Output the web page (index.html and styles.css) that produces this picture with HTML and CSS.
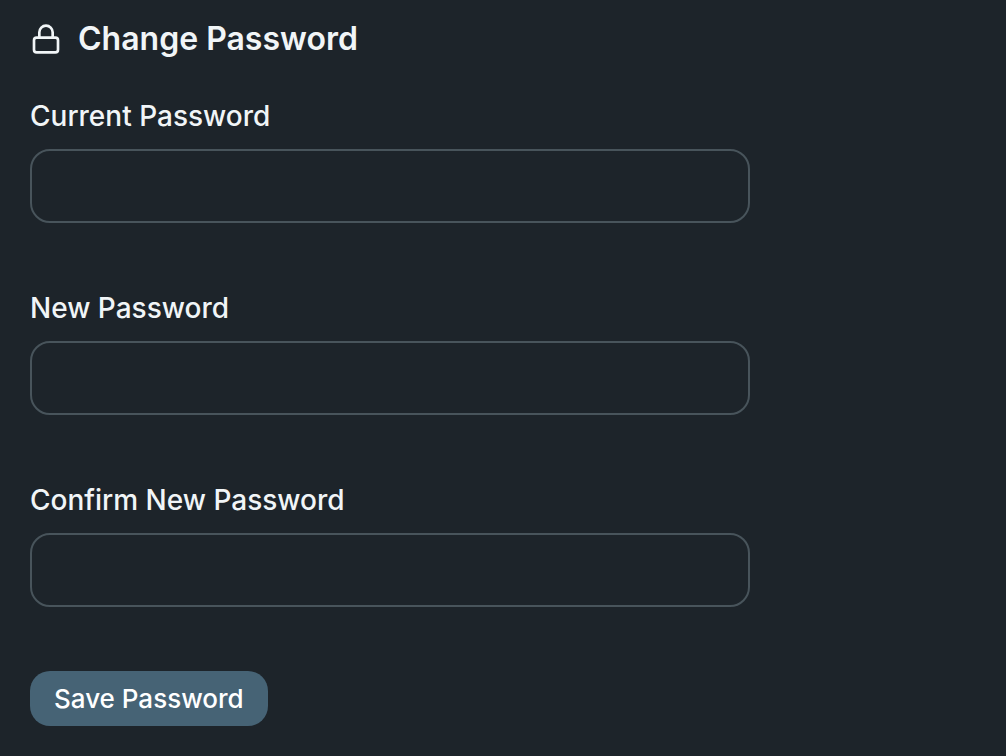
FILE: index.html
```html
<!DOCTYPE html>
<html lang="en">
<head>
    <meta charset="UTF-8">
    <meta name="viewport" content="width=device-width, initial-scale=1.0">
    <title>Change Password</title>
    <link rel="stylesheet" href="styles.css">
</head>
<body>
    <main class="settings">
        <h2 class="title">
            <svg class="lock-icon" viewBox="0 0 24 24" fill="none" stroke="currentColor" stroke-width="2" stroke-linecap="round" stroke-linejoin="round" aria-hidden="true">
                <rect x="3" y="11" width="18" height="11" rx="2" ry="2"/>
                <path d="M7 11V7a5 5 0 0 1 10 0v4"/>
            </svg>
            Change Password
        </h2>
        <form class="password-form">
            <div class="field">
                <label for="current-password">Current Password</label>
                <input type="password" id="current-password" autocomplete="current-password">
            </div>
            <div class="field">
                <label for="new-password">New Password</label>
                <input type="password" id="new-password" autocomplete="new-password">
            </div>
            <div class="field">
                <label for="confirm-password">Confirm New Password</label>
                <input type="password" id="confirm-password" autocomplete="new-password">
            </div>
            <button type="submit" class="save">Save Password</button>
        </form>
    </main>
</body>
</html>
```

FILE: styles.css
```css
* {
    box-sizing: border-box;
}
body {
    margin: 0;
    background-color: #1d242a;
    color: #f1f5f7;
    font-family: Inter, sans-serif;
}
.settings {
    padding: 15px 30px;
}
.title {
    display: flex;
    align-items: center;
    gap: 16px;
    margin: 0 0 32px;
    font-size: 32px;
    font-weight: 600;
    line-height: 48px;
}
.lock-icon {
    width: 32px;
    height: 32px;
}
.password-form {
    max-width: 720px;
}
.field {
    margin-bottom: 64px;
}
.field label {
    display: block;
    margin-bottom: 12px;
    font-size: 28px;
    font-weight: 500;
    line-height: 42px;
}
.field input {
    display: block;
    width: 100%;
    height: 74px;
    padding: 0 24px;
    background-color: transparent;
    border: 2px solid #48545b;
    border-radius: 20px;
    color: inherit;
    font: inherit;
    font-size: 28px;
}
.save {
    padding: 8px 24px;
    background-color: #466375;
    border: none;
    border-radius: 20px;
    color: #ffffff;
    font-family: inherit;
    font-size: 26px;
    font-weight: 500;
    line-height: 39px;
    cursor: pointer;
}
```
